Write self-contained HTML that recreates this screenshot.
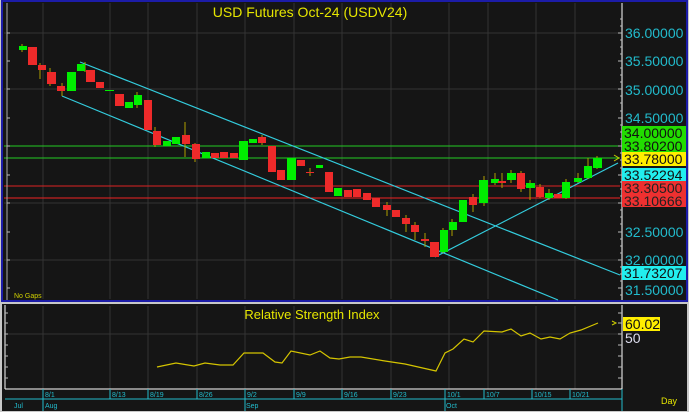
<!DOCTYPE html><html><head><meta charset="utf-8"><style>
body{margin:0;width:689px;height:412px;overflow:hidden;background:#c8c8c8;font-family:"Liberation Sans",sans-serif}
svg{display:block}
text{font-family:"Liberation Sans",sans-serif}
</style></head><body>
<svg width="689" height="412" viewBox="0 0 689 412">
<rect x="0" y="0" width="689" height="412" fill="#c8c8c8"/>
<rect x="2" y="1" width="685" height="300" fill="#151515" stroke="#1c1ca8" stroke-width="2"/>
<rect x="2" y="304" width="685" height="107" fill="#151515"/>
<g stroke="#333" stroke-width="1">
<line x1="43" y1="3" x2="43" y2="299"/><line x1="110" y1="3" x2="110" y2="299"/><line x1="148" y1="3" x2="148" y2="299"/><line x1="197" y1="3" x2="197" y2="299"/><line x1="245" y1="3" x2="245" y2="299"/><line x1="294" y1="3" x2="294" y2="299"/><line x1="342" y1="3" x2="342" y2="299"/><line x1="391" y1="3" x2="391" y2="299"/><line x1="449" y1="3" x2="449" y2="299"/><line x1="488" y1="3" x2="488" y2="299"/><line x1="536" y1="3" x2="536" y2="299"/><line x1="575" y1="3" x2="575" y2="299"/>
<line x1="4" y1="33" x2="620" y2="33"/><line x1="4" y1="89" x2="620" y2="89"/><line x1="4" y1="146" x2="620" y2="146"/><line x1="4" y1="203" x2="620" y2="203"/><line x1="4" y1="260" x2="620" y2="260"/>
<line x1="43" y1="306" x2="43" y2="389"/><line x1="110" y1="306" x2="110" y2="389"/><line x1="148" y1="306" x2="148" y2="389"/><line x1="197" y1="306" x2="197" y2="389"/><line x1="245" y1="306" x2="245" y2="389"/><line x1="294" y1="306" x2="294" y2="389"/><line x1="342" y1="306" x2="342" y2="389"/><line x1="391" y1="306" x2="391" y2="389"/><line x1="449" y1="306" x2="449" y2="389"/><line x1="488" y1="306" x2="488" y2="389"/><line x1="536" y1="306" x2="536" y2="389"/><line x1="575" y1="306" x2="575" y2="389"/>
<line x1="4" y1="334" x2="620" y2="334"/>
</g>
<text x="310" y="17" fill="#e6e600" font-size="14" text-anchor="middle">USD  Futures  Oct-24  (USDV24)</text>
<text x="14" y="298" fill="#d0d000" font-size="7">No Gaps</text>
<line x1="4" y1="146" x2="620" y2="146" stroke="#22cc22"/>
<line x1="4" y1="158" x2="620" y2="158" stroke="#22cc22"/>
<line x1="4" y1="186" x2="620" y2="186" stroke="#dd2222"/>
<line x1="4" y1="198" x2="620" y2="198" stroke="#ee2222"/>
<path d="M614 155 L619 158 L614 161" stroke="#cccc00" fill="none"/>
<g stroke="#33ccdd" stroke-width="1.2">
<line x1="80" y1="62" x2="620" y2="275"/>
<line x1="62" y1="96" x2="558" y2="300"/>
<line x1="435" y1="257" x2="618" y2="163"/>
</g>
<g stroke="#b0a000" stroke-width="1">
<line x1="22" y1="44" x2="22" y2="52"/><line x1="40" y1="63" x2="40" y2="79"/><line x1="50" y1="68" x2="50" y2="86"/><line x1="62" y1="83" x2="62" y2="96"/><line x1="85" y1="62" x2="85" y2="72"/><line x1="137" y1="92" x2="137" y2="108"/><line x1="155" y1="127" x2="155" y2="147"/><line x1="185" y1="122" x2="185" y2="157"/><line x1="195" y1="143" x2="195" y2="162"/><line x1="262" y1="135" x2="262" y2="145"/><line x1="310" y1="168" x2="310" y2="176"/><line x1="387" y1="202" x2="387" y2="216"/><line x1="406" y1="215" x2="406" y2="232"/><line x1="415" y1="222" x2="415" y2="240"/><line x1="425" y1="233" x2="425" y2="247"/><line x1="443" y1="228" x2="443" y2="253"/><line x1="452" y1="219" x2="452" y2="236"/><line x1="473" y1="194" x2="473" y2="212"/><line x1="484" y1="176" x2="484" y2="206"/><line x1="495" y1="173" x2="495" y2="185"/><line x1="502" y1="173" x2="502" y2="188"/><line x1="511" y1="170" x2="511" y2="183"/><line x1="521" y1="171" x2="521" y2="192"/><line x1="530" y1="180" x2="530" y2="200"/><line x1="540" y1="184" x2="540" y2="198"/><line x1="549" y1="189" x2="549" y2="200"/><line x1="566" y1="179" x2="566" y2="199"/><line x1="578" y1="173" x2="578" y2="183"/><line x1="588" y1="158" x2="588" y2="179"/><line x1="597" y1="156" x2="597" y2="169"/>
</g>
<g>
<rect x="19" y="46" width="8" height="4" fill="#00ee00"/>
<rect x="28" y="47" width="9" height="18" fill="#ee2a2a"/>
<rect x="38" y="65" width="8" height="5" fill="#ee2a2a"/>
<rect x="47" y="72" width="9" height="12" fill="#ee2a2a"/>
<rect x="57" y="86" width="8" height="5" fill="#ee2a2a"/>
<rect x="67" y="72" width="9" height="19" fill="#00ee00"/>
<rect x="77" y="64" width="8" height="7" fill="#00ee00"/>
<rect x="86" y="70" width="9" height="12" fill="#ee2a2a"/>
<rect x="96" y="82" width="8" height="6" fill="#ee2a2a"/>
<rect x="105" y="90" width="9" height="1" fill="#00ee00"/>
<rect x="115" y="94" width="9" height="12" fill="#ee2a2a"/>
<rect x="125" y="102" width="8" height="6" fill="#00ee00"/>
<rect x="134" y="95" width="8" height="10" fill="#00ee00"/>
<rect x="144" y="100" width="8" height="30" fill="#ee2a2a"/>
<rect x="153" y="131" width="8" height="14" fill="#ee2a2a"/>
<rect x="163" y="141" width="8" height="5" fill="#00ee00"/>
<rect x="172" y="137" width="8" height="7" fill="#00ee00"/>
<rect x="182" y="135" width="8" height="9" fill="#ee2a2a"/>
<rect x="192" y="144" width="8" height="15" fill="#ee2a2a"/>
<rect x="202" y="152" width="8" height="6" fill="#00ee00"/>
<rect x="211" y="153" width="8" height="5" fill="#ee2a2a"/>
<rect x="220" y="152" width="8" height="6" fill="#ee2a2a"/>
<rect x="230" y="153" width="8" height="5" fill="#ee2a2a"/>
<rect x="239" y="141" width="9" height="19" fill="#00ee00"/>
<rect x="249" y="139" width="8" height="4" fill="#00ee00"/>
<rect x="258" y="137" width="8" height="6" fill="#ee2a2a"/>
<rect x="268" y="146" width="8" height="26" fill="#ee2a2a"/>
<rect x="277" y="170" width="8" height="10" fill="#ee2a2a"/>
<rect x="287" y="158" width="9" height="22" fill="#00ee00"/>
<rect x="297" y="160" width="8" height="6" fill="#ee2a2a"/>
<rect x="306" y="172" width="8" height="1" fill="#ee2a2a"/>
<rect x="316" y="165" width="7" height="3" fill="#00ee00"/>
<rect x="325" y="172" width="8" height="20" fill="#ee2a2a"/>
<rect x="334" y="188" width="8" height="8" fill="#00ee00"/>
<rect x="344" y="190" width="8" height="7" fill="#ee2a2a"/>
<rect x="353" y="189" width="8" height="8" fill="#ee2a2a"/>
<rect x="363" y="193" width="8" height="7" fill="#ee2a2a"/>
<rect x="372" y="198" width="8" height="9" fill="#ee2a2a"/>
<rect x="383" y="205" width="8" height="5" fill="#ee2a2a"/>
<rect x="392" y="210" width="8" height="7" fill="#ee2a2a"/>
<rect x="402" y="218" width="8" height="6" fill="#ee2a2a"/>
<rect x="411" y="225" width="8" height="7" fill="#ee2a2a"/>
<rect x="421" y="239" width="8" height="2" fill="#ee2a2a"/>
<rect x="430" y="242" width="9" height="15" fill="#ee2a2a"/>
<rect x="440" y="230" width="8" height="22" fill="#00ee00"/>
<rect x="449" y="222" width="8" height="8" fill="#00ee00"/>
<rect x="459" y="200" width="8" height="22" fill="#00ee00"/>
<rect x="469" y="197" width="8" height="8" fill="#ee2a2a"/>
<rect x="479" y="180" width="9" height="23" fill="#00ee00"/>
<rect x="491" y="179" width="8" height="4" fill="#00ee00"/>
<rect x="498" y="181" width="8" height="2" fill="#ee2a2a"/>
<rect x="507" y="173" width="9" height="7" fill="#00ee00"/>
<rect x="517" y="173" width="8" height="16" fill="#ee2a2a"/>
<rect x="526" y="183" width="9" height="5" fill="#00ee00"/>
<rect x="536" y="187" width="8" height="10" fill="#ee2a2a"/>
<rect x="545" y="193" width="8" height="5" fill="#00ee00"/>
<rect x="554" y="194" width="8" height="4" fill="#ee2a2a"/>
<rect x="562" y="182" width="8" height="16" fill="#00ee00"/>
<rect x="574" y="178" width="8" height="4" fill="#00ee00"/>
<rect x="584" y="166" width="8" height="12" fill="#00ee00"/>
<rect x="593" y="158" width="9" height="10" fill="#00ee00"/>
</g>
<line x1="622" y1="3" x2="622" y2="300" stroke="#fff"/>
<line x1="7" y1="3" x2="7" y2="300" stroke="#aaa"/>
<g stroke="#bbb">
<path d="M618 33h4M618 61h4M618 89h4M618 118h4M618 146h4M618 175h4M618 203h4M618 232h4M618 260h4M618 288h4"/>
<path d="M620 19h2M620 26h2M620 40h2M620 47h2M620 54h2M620 68h2M620 75h2M620 82h2M620 96h2M620 103h2M620 111h2M620 125h2M620 132h2M620 139h2M620 153h2M620 160h2M620 168h2M620 182h2M620 189h2M620 196h2M620 210h2M620 217h2M620 224h2M620 239h2M620 246h2M620 253h2M620 267h2M620 274h2M620 281h2M620 295h2"/>
<path d="M7 33h3M7 61h3M7 89h3M7 118h3M7 146h3M7 175h3M7 203h3M7 232h3M7 260h3M7 288h3"/>
</g>
<g fill="#22bbcc" font-size="14">
<text x="625" y="38">36.00000</text><text x="625" y="66">35.50000</text><text x="625" y="95">35.00000</text><text x="625" y="123">34.50000</text><text x="625" y="237">32.50000</text><text x="625" y="265">32.00000</text><text x="625" y="295">31.50000</text>
</g>
<rect x="622" y="126" width="64" height="14" fill="#22dd00"/><text x="624" y="138" font-size="14" fill="#111">34.00000</text>
<rect x="622" y="140" width="64" height="12" fill="#22dd00"/><text x="624" y="151" font-size="14" fill="#111">33.80200</text>
<rect x="622" y="152" width="64" height="14" fill="#ffee00"/><text x="624" y="164" font-size="14" fill="#111">33.78000</text>
<rect x="622" y="168" width="64" height="13" fill="#22eeee"/><text x="624" y="180" font-size="14" fill="#111">33.52294</text>
<rect x="622" y="181" width="64" height="13" fill="#ee3030"/><text x="624" y="193" font-size="14" fill="#222">33.30500</text>
<rect x="622" y="194" width="64" height="13" fill="#ee3030"/><text x="624" y="206" font-size="14" fill="#222">33.10666</text>
<rect x="622" y="266" width="64" height="14" fill="#22eeee"/><text x="624" y="278" font-size="14" fill="#111">31.73207</text>
<line x1="622" y1="305" x2="622" y2="389" stroke="#fff"/>
<line x1="5" y1="389" x2="622" y2="389" stroke="#fff"/>
<line x1="5" y1="305" x2="5" y2="389" stroke="#fff"/>
<g stroke="#bbb"><path d="M618 313h4M618 323h4M618 334h4M618 345h4M618 356h4M618 367h4M618 378h4M5 313h3M5 323h3M5 334h3M5 345h3M5 356h3M5 367h3M5 378h3"/></g>
<text x="312" y="319" fill="#e6e600" font-size="13" text-anchor="middle">Relative  Strength  Index</text>
<polyline fill="none" stroke="#d4c400" stroke-width="1.2" points="157,367 176,363 194,366 205,363 220,365 233,365 244,353 263,353 275,362 282,363 291,351 310,355 320,351 330,358 339,359 350,357 361,357 385,361 405,364 436,371 445,353 453,349 464,339 473,342 484,331 502,332 511,329 521,336 530,333 541,339 550,337 560,339 570,333 581,330 598,323"/>
<path d="M612 321 L616 323 L612 325" stroke="#cccc00" fill="none"/>
<rect x="623" y="317" width="37" height="14" fill="#ffee00"/><text x="625" y="329" font-size="14" fill="#111">60.02</text>
<text x="625" y="343" font-size="14" fill="#dde">50</text>
<line x1="5" y1="399" x2="622" y2="399" stroke="#22bbcc"/>
<line x1="622" y1="389" x2="622" y2="411" stroke="#22bbcc"/>
<g stroke="#22bbcc"><line x1="43" y1="389" x2="43" y2="411"/><line x1="110" y1="389" x2="110" y2="399"/><line x1="148" y1="389" x2="148" y2="399"/><line x1="197" y1="389" x2="197" y2="399"/><line x1="245" y1="389" x2="245" y2="411"/><line x1="294" y1="389" x2="294" y2="399"/><line x1="342" y1="389" x2="342" y2="399"/><line x1="391" y1="389" x2="391" y2="399"/><line x1="445" y1="389" x2="445" y2="411"/><line x1="484" y1="389" x2="484" y2="399"/><line x1="532" y1="389" x2="532" y2="399"/><line x1="570" y1="389" x2="570" y2="399"/></g>
<g fill="#22bbcc" font-size="7">
<text x="45" y="397">8/1</text><text x="112" y="397">8/13</text><text x="150" y="397">8/19</text><text x="199" y="397">8/26</text><text x="247" y="397">9/2</text><text x="296" y="397">9/9</text><text x="344" y="397">9/16</text><text x="393" y="397">9/23</text><text x="447" y="397">10/1</text><text x="486" y="397">10/7</text><text x="534" y="397">10/15</text><text x="572" y="397">10/21</text>
<text x="14" y="408">Jul</text><text x="45" y="408">Aug</text><text x="246" y="408">Sep</text><text x="446" y="408">Oct</text>
</g>
<text x="661" y="404" fill="#e6e600" font-size="9">Day</text>
</svg>
</body></html>
